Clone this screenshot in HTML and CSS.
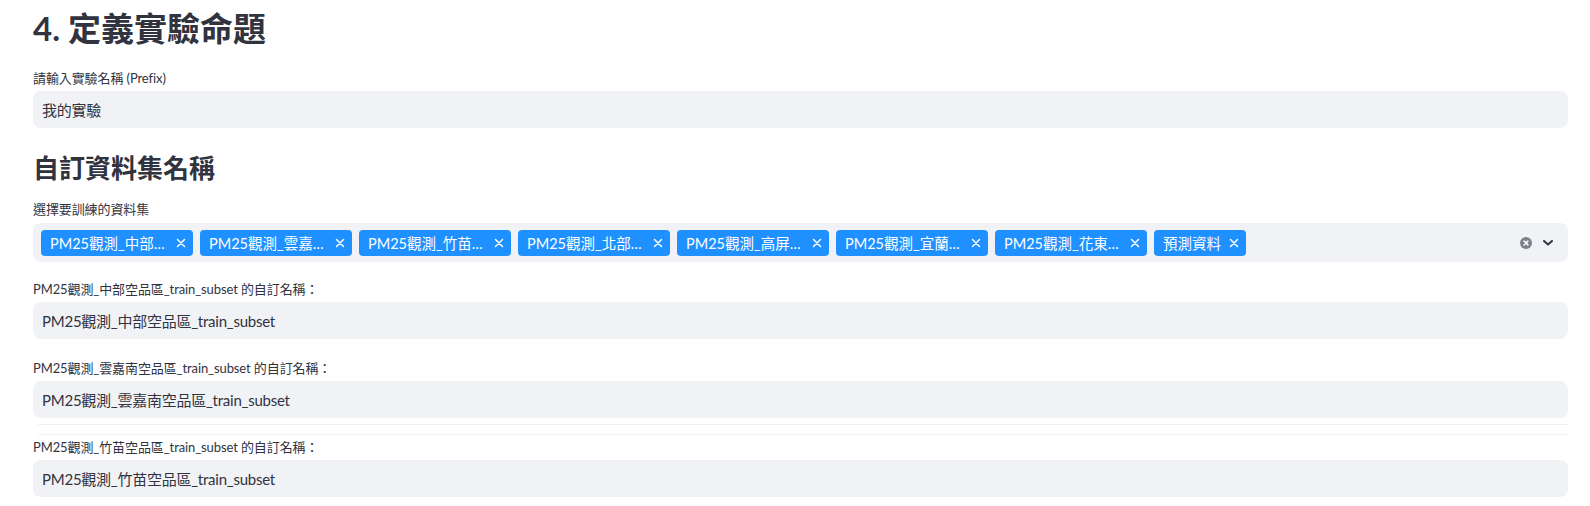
FILE: index.html
```html
<!DOCTYPE html>
<html lang="zh-Hant">
<head>
<meta charset="utf-8">
<title>定義實驗命題</title>
<link rel="stylesheet" href="styles.css">
</head>
<body>
<main class="main">
  <h2 class="title">4. 定義實驗命題</h2>

  <div class="label">請輸入實驗名稱 (Prefix)</div>
  <div class="input">我的實驗</div>

  <h3 class="subtitle">自訂資料集名稱</h3>

  <div class="label label-ms">選擇要訓練的資料集</div>
  <div class="multiselect">
    <div class="tags">
      <span class="tag"><span class="tag-text">PM25觀測_中部空品區_train_subset</span><svg class="tag-x" viewBox="0 0 12 12"><path d="M2.5 2.5 9.5 9.5M9.5 2.5 2.5 9.5"/></svg></span>
      <span class="tag"><span class="tag-text">PM25觀測_雲嘉南空品區_train_subset</span><svg class="tag-x" viewBox="0 0 12 12"><path d="M2.5 2.5 9.5 9.5M9.5 2.5 2.5 9.5"/></svg></span>
      <span class="tag"><span class="tag-text">PM25觀測_竹苗空品區_train_subset</span><svg class="tag-x" viewBox="0 0 12 12"><path d="M2.5 2.5 9.5 9.5M9.5 2.5 2.5 9.5"/></svg></span>
      <span class="tag"><span class="tag-text">PM25觀測_北部空品區_train_subset</span><svg class="tag-x" viewBox="0 0 12 12"><path d="M2.5 2.5 9.5 9.5M9.5 2.5 2.5 9.5"/></svg></span>
      <span class="tag"><span class="tag-text">PM25觀測_高屏空品區_train_subset</span><svg class="tag-x" viewBox="0 0 12 12"><path d="M2.5 2.5 9.5 9.5M9.5 2.5 2.5 9.5"/></svg></span>
      <span class="tag"><span class="tag-text">PM25觀測_宜蘭空品區_train_subset</span><svg class="tag-x" viewBox="0 0 12 12"><path d="M2.5 2.5 9.5 9.5M9.5 2.5 2.5 9.5"/></svg></span>
      <span class="tag"><span class="tag-text">PM25觀測_花東空品區_train_subset</span><svg class="tag-x" viewBox="0 0 12 12"><path d="M2.5 2.5 9.5 9.5M9.5 2.5 2.5 9.5"/></svg></span>
      <span class="tag"><span class="tag-text">預測資料</span><svg class="tag-x" viewBox="0 0 12 12"><path d="M2.5 2.5 9.5 9.5M9.5 2.5 2.5 9.5"/></svg></span>
    </div>
    <div class="ms-icons">
      <svg class="clear" viewBox="0 0 12 12"><circle cx="6" cy="6" r="6"/><path d="M4.1 4.1 7.9 7.9M7.9 4.1 4.1 7.9"/></svg>
      <svg class="chev" viewBox="0 0 10 6"><path d="M1 1 5 4.6 9 1"/></svg>
    </div>
  </div>

  <div class="label label-gap">PM25觀測_中部空品區_train_subset 的自訂名稱：</div>
  <div class="input">PM25觀測_中部空品區_train_subset</div>

  <div class="label label-gap2">PM25觀測_雲嘉南空品區_train_subset 的自訂名稱：</div>
  <div class="input">PM25觀測_雲嘉南空品區_train_subset</div>

  <div class="rule rule-1"></div>
  <div class="rule rule-2"></div>

  <div class="label">PM25觀測_竹苗空品區_train_subset 的自訂名稱：</div>
  <div class="input">PM25觀測_竹苗空品區_train_subset</div>
</main>
</body>
</html>
```

FILE: styles.css
```css
html, body {
  margin: 0;
  padding: 0;
  background: #ffffff;
}

body {
  font-family: "Lato", "Noto Sans CJK TC", sans-serif;
  color: #31333f;
  overflow: hidden;
}

.main {
  width: 1535px;
  padding: 0 22px 0 33px;
  display: flex;
  flex-direction: column;
}

.title {
  margin: 6px 0 0;
  font-size: 33px;
  line-height: 44px;
  font-weight: 700;
  color: #31333f;
}

.subtitle {
  margin: 22px 0 0;
  font-size: 26px;
  line-height: 37px;
  font-weight: 700;
  color: #31333f;
}

.label {
  margin: 16px 0 1px;
  height: 24px;
  font-size: 13px;
  line-height: 24px;
  letter-spacing: -0.1px;
  color: #31333f;
  white-space: nowrap;
}

.title + .label { margin-top: 16px; }
.label-ms { margin-top: 10px; }
.label-gap { margin-top: 15px; }
.label-gap2 { margin-top: 17px; }
.rule + .label { margin-top: 0; }

.input {
  height: 37px;
  background: #f0f2f6;
  border-radius: 8px;
  padding: 0 9px;
  display: flex;
  align-items: center;
  font-size: 15px;
  letter-spacing: -0.25px;
  color: #31333f;
  white-space: nowrap;
}

.multiselect {
  margin-top: 1px;
  height: 39px;
  background: #f0f2f6;
  border-radius: 8px;
  padding: 0 15px 0 8px;
  display: flex;
  align-items: center;
}

.tags {
  flex: 1;
  display: flex;
  gap: 7px;
  align-items: center;
}

.tag {
  height: 26px;
  background: #1e90ff;
  border-radius: 4px;
  color: #ffffff;
  font-size: 14.5px;
  display: flex;
  align-items: center;
  padding: 0 6px 0 9px;
}

.tag-text {
  max-width: 118px;
  overflow: hidden;
  text-overflow: ellipsis;
  white-space: nowrap;
}

.tag-x {
  width: 12px;
  height: 12px;
  margin-left: 7px;
  fill: none;
  stroke: #ffffff;
  stroke-width: 1.5;
  stroke-linecap: round;
}

.ms-icons {
  display: flex;
  align-items: center;
  gap: 11px;
}

.clear {
  width: 12px;
  height: 12px;
}

.clear circle {
  fill: #7f8189;
}

.clear path {
  fill: none;
  stroke: #ffffff;
  stroke-width: 1.5;
  stroke-linecap: round;
}

.chev {
  width: 10px;
  height: 6px;
  fill: none;
  stroke: #31333f;
  stroke-width: 2;
  stroke-linecap: round;
  stroke-linejoin: round;
}

.rule {
  height: 1px;
  margin-left: 5px;
  background: #eef0f2;
}

.rule-1 { margin-top: 6px; }
.rule-2 { margin-top: 9px; }
```
